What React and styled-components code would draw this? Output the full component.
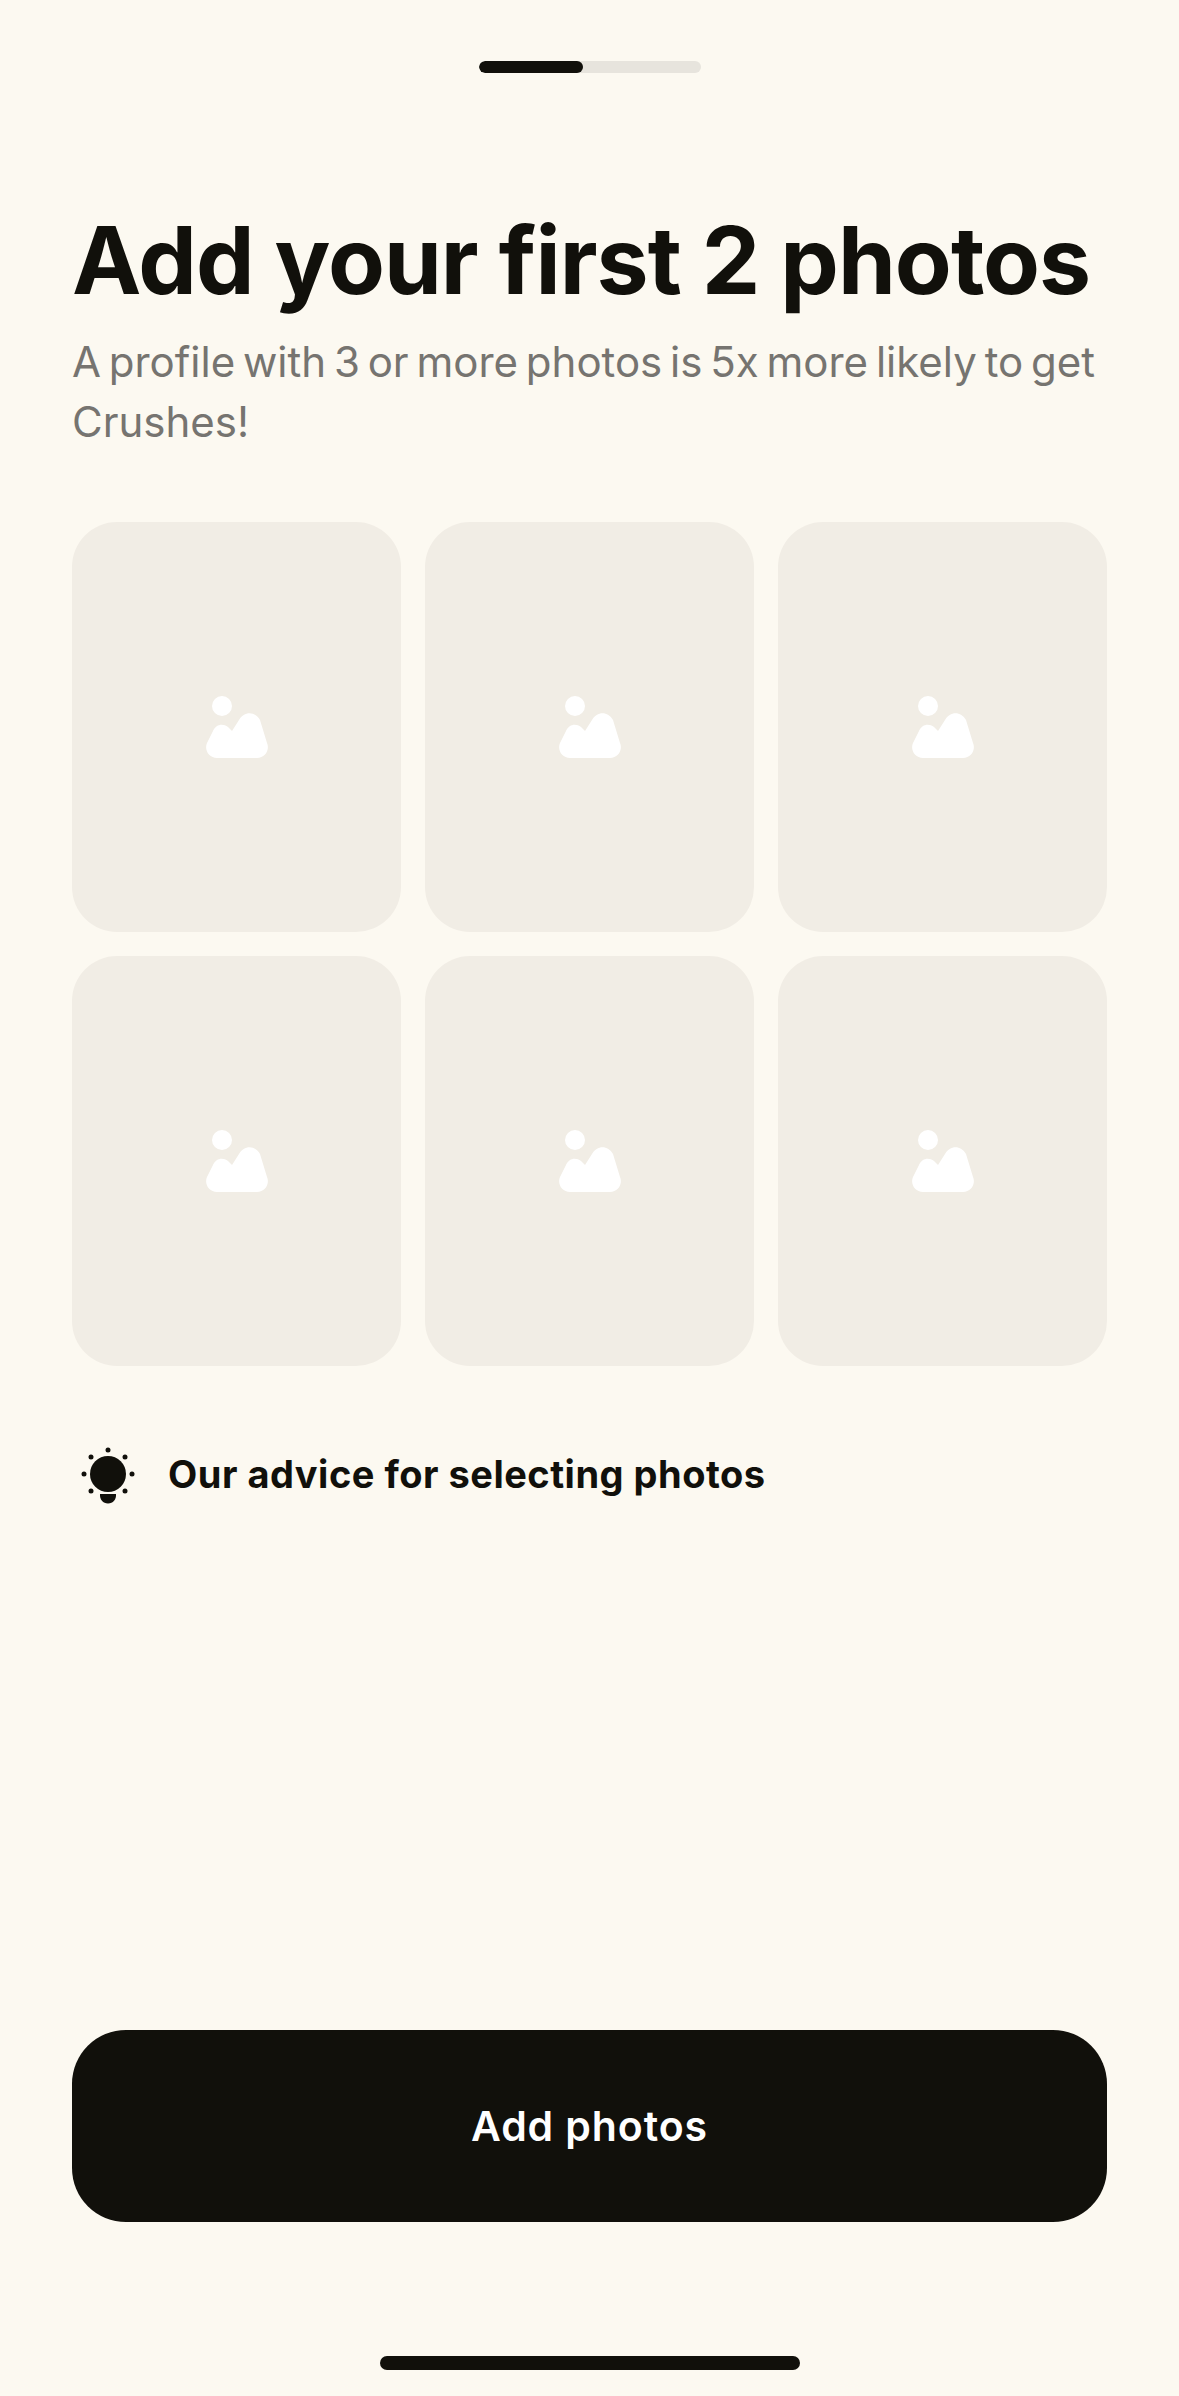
import styled, { createGlobalStyle } from "styled-components";

const GlobalStyle = createGlobalStyle`
	html, body {
		margin: 0;
		padding: 0;
		background: #fcf9f1;
	}
	* {
		box-sizing: border-box;
	}
`;

const Screen = styled.div`
	display: flex;
	flex-direction: column;
	height: 2396px;
	padding: 61px 72px 26px;
	background: #fcf9f1;
	font-family: Inter, "Liberation Sans", sans-serif;
	color: #11100b;
`;

const Progress = styled.div`
	align-self: center;
	width: 222px;
	height: 12px;
	border-radius: 6px;
	background: #e7e4dd;
	overflow: hidden;
`;

const ProgressFill = styled.div`
	height: 100%;
	border-radius: 6px;
	background: #11100b;
`;

const Title = styled.h1`
	margin: 131px 0 0;
	font-size: 93px;
	line-height: 112px;
	font-weight: 700;
	letter-spacing: -1px;
	white-space: nowrap;
`;

const Blurb = styled.p`
	margin: 16px 0 0;
	font-size: 42px;
	line-height: 60px;
	font-weight: 400;
	letter-spacing: 0;
	word-spacing: -4px;
	color: #767470;
`;

const Grid = styled.div`
	display: grid;
	grid-template-columns: repeat(3, 1fr);
	grid-auto-rows: 410px;
	gap: 24px;
	margin-top: 70px;
`;

const Slot = styled.div`
	display: flex;
	align-items: center;
	justify-content: center;
	border-radius: 45px;
	background: #f1ede5;
`;

const Advice = styled.div`
	display: flex;
	align-items: center;
	gap: 32px;
	margin-top: 78px;
	padding-left: 8px;
`;

const AdviceText = styled.span`
	font-size: 38px;
	line-height: 46px;
	font-weight: 700;
	letter-spacing: 0.5px;
`;

const AddButton = styled.button`
	display: block;
	width: 100%;
	height: 192px;
	margin-top: auto;
	border: 0;
	border-radius: 54px;
	background: #11100b;
	color: #fff;
	font-family: inherit;
	font-size: 41px;
	font-weight: 600;
	letter-spacing: 0.9px;
	cursor: pointer;
`;

const HomeBar = styled.div`
	align-self: center;
	width: 420px;
	height: 14px;
	margin-top: 134px;
	border-radius: 7px;
	background: #11100b;
`;

const PhotoIcon = () => (
	<svg width="62" height="62" viewBox="0 0 62 62" fill="#fff">
		<circle cx="16" cy="10" r="10" />
		<path d="M11 62C3 62 -2 54 1 47L7 35C10 28 17 27 22 31L26 35L33 24C38 15 49 15 54 24L61 47C64 54 59 62 51 62Z" />
	</svg>
);

const BulbIcon = () => (
	<svg width="56" height="60" viewBox="0 -3 56 60" fill="#11100b">
		<circle cx="28" cy="3" r="2.5" />
		<circle cx="11" cy="10" r="2.5" />
		<circle cx="45" cy="10" r="2.5" />
		<circle cx="4" cy="27" r="2.5" />
		<circle cx="52" cy="27" r="2.5" />
		<circle cx="11" cy="44" r="2.5" />
		<circle cx="45" cy="44" r="2.5" />
		<circle cx="28" cy="27" r="18" />
		<path d="M20 47H36C36.500 52.500 33 56.500 28 56.500C23 56.500 19.500 52.500 20 47Z" />
	</svg>
);

export default function App() {
	return (
		<>
			<GlobalStyle />
			<Screen>
				<Progress>
					<ProgressFill style={{ width: `${(104 / 222) * 100}%` }} />
				</Progress>
				<Title>Add your first 2 photos</Title>
				<Blurb>A profile with 3 or more photos is 5x more likely to get Crushes!</Blurb>
				<Grid>
					{[0, 1, 2, 3, 4, 5].map((i) => (
						<Slot key={i}>
							<PhotoIcon />
						</Slot>
					))}
				</Grid>
				<Advice>
					<BulbIcon />
					<AdviceText>Our advice for selecting photos</AdviceText>
				</Advice>
				<AddButton>Add photos</AddButton>
				<HomeBar />
			</Screen>
		</>
	);
}
